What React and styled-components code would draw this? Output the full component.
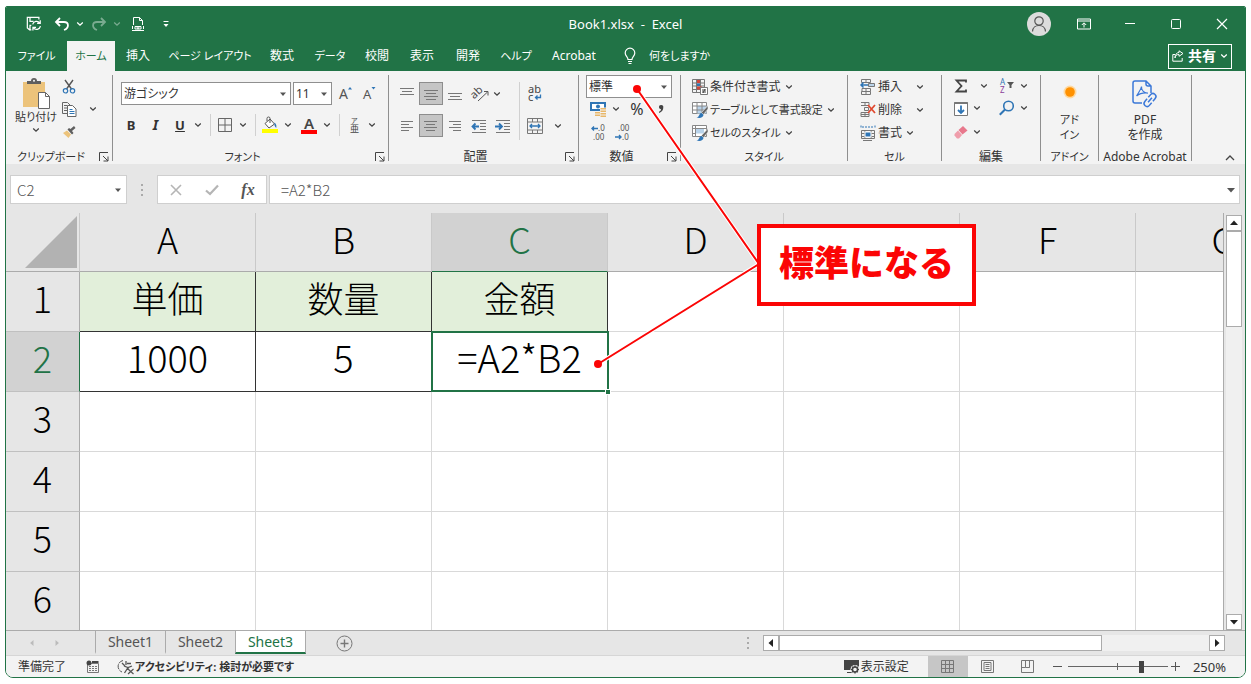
import React from "react";
import styled, { createGlobalStyle, css } from "styled-components";

const COLORS = {
  green: "#217346",
  ribbon: "#f3f3f3",
  chrome: "#e6e6e6",
  selected: "#d2d2d2",
  line: "#ababab",
  grid: "#d9d9d9",
  ink: "#333333",
  blue: "#2f75b5",
  red: "#fb0505",
  headerFill: "#e2efda",
};

const GlobalStyle = createGlobalStyle`
  *, *::before, *::after { box-sizing: border-box; }

  body {
    margin: 0;
    background: #fff;
    color: ${COLORS.ink};
    font: 12px/16px "Noto Sans", "Noto Sans CJK JP", sans-serif;
    font-feature-settings: "palt";
  }

  button, input, select {
    appearance: none;
    background: none;
    border: 0;
    border-radius: 0;
    color: inherit;
    font: inherit;
    font-feature-settings: inherit;
    margin: 0;
    outline: 0;
    padding: 0;
  }

  svg { display: block; flex: none; overflow: visible; }
`;

/* Shell */

const Window = styled.div`
  border: 1px solid ${COLORS.green};
  border-radius: 2px 2px 8px 8px;
  display: flex;
  flex-direction: column;
  height: calc(100vh - 12px);
  margin: 6px 5px;
  overflow: hidden;
  position: relative;
`;

const TitleBar = styled.header`
  align-items: center;
  background: ${COLORS.green};
  color: #fff;
  display: grid;
  flex: none;
  grid-template-columns: 1fr auto 1fr;
  height: 34px;
`;

const Title = styled.h1`
  font-size: 13px;
  font-weight: 400;
  margin: 0;
  white-space: pre;
`;

const Cluster = styled.div`
  align-items: center;
  display: flex;
  justify-content: ${(p) => (p.$end ? "flex-end" : "flex-start")};
  padding: ${(p) => p.$pad || "0"};
`;

const Tool = styled.button`
  align-items: center;
  background: ${(p) => (p.$on ? "#c5c5c5" : "none")};
  border: ${(p) => (p.$on ? "1px solid #8d8d8d" : "0")};
  display: flex;
  flex: none;
  font-size: ${(p) => p.$size || 12}px;
  height: ${(p) => p.$h || 22}px;
  justify-content: center;
  opacity: ${(p) => (p.$faded ? 0.4 : 1)};
  width: ${(p) => p.$w || 24}px;
`;

/* Tabs */

const TabBar = styled.nav`
  align-items: stretch;
  background: ${COLORS.green};
  color: #fff;
  display: flex;
  flex: none;
  height: 30px;
`;

const Tab = styled.button`
  background: ${(p) => (p.$active ? COLORS.ribbon : "none")};
  color: ${(p) => (p.$active ? COLORS.green : "inherit")};
  font-size: ${(p) => (p.$kana ? 11 : 12)}px;
  text-align: center;
  white-space: nowrap;
  width: ${(p) => p.$w}px;
`;

const TellMe = styled.button`
  align-items: center;
  display: flex;
  font-size: 11px;
  gap: 13px;
  margin-left: 17px;
`;

const Share = styled.button`
  align-items: center;
  align-self: center;
  border: 1px solid #fff;
  display: flex;
  font-size: 14px;
  font-weight: 700;
  gap: 4px;
  height: 25px;
  margin: 0 13px 0 auto;
  padding: 0 3px;
`;

/* Ribbon */

const Ribbon = styled.div`
  background: ${COLORS.ribbon};
  display: flex;
  flex: none;
  height: 93px;
  padding: 4px 0 3px;
`;

const GroupBox = styled.section`
  border-right: 1px solid #8f8f8f;
  display: flex;
  flex: none;
  flex-direction: column;
  width: ${(p) => p.$w}px;
`;

const GroupBody = styled.div`
  display: flex;
  flex: 1;
  padding-left: ${(p) => p.$left || 0}px;
`;

const GroupFooter = styled.footer`
  align-items: center;
  display: grid;
  grid-template-columns: 1fr ${(p) => (p.$launcher ? "16px" : "")};
  height: 10px;
  justify-items: center;
  line-height: 12px;

  h2 {
    font-size: ${(p) => (p.$kana ? 11 : 12)}px;
    font-weight: 400;
    margin: 0;
    white-space: nowrap;
  }
`;

const Lines = styled.div`
  display: flex;
  flex-direction: column;
  gap: ${(p) => p.$gap || 0}px;
  padding-top: ${(p) => p.$top || 0}px;
`;

const Line = styled.div`
  align-items: center;
  display: flex;
  gap: ${(p) => p.$gap || 0}px;
`;

const EditGrid = styled.div`
  align-content: start;
  display: grid;
  grid-template-columns: 20px 12px 14px 20px 14px;
  grid-template-rows: 22px 24px 22px;
`;

const Divider = styled.span`
  align-self: ${(p) => (p.$h ? "flex-start" : "center")};
  background: #d0d0d0;
  flex: none;
  height: ${(p) => p.$h || 22}px;
  margin: ${(p) => p.$margin};
  width: 1px;
`;

const BigButton = styled.button`
  align-items: center;
  display: flex;
  flex-direction: column;
  font-size: ${(p) => (p.$kana ? 11 : 12)}px;
  line-height: 15px;
  white-space: nowrap;
  width: ${(p) => p.$w}px;

  svg { margin: ${(p) => p.$iconMargin || "4px 0 0"}; }
`;

const WideButton = styled.button`
  align-items: center;
  display: flex;
  font-size: ${(p) => (p.$kana ? 11 : 12)}px;
  gap: 2px;
  height: 23px;
  white-space: nowrap;

  svg:last-child { margin-left: ${(p) => p.$push || 2}px; }
`;

const Combo = styled.label`
  align-items: center;
  background: #fff;
  border: 1px solid #8f8f8f;
  display: flex;
  height: 23px;
  padding-right: 4px;
  width: ${(p) => p.$w}px;

  select {
    flex: 1;
    min-width: 0;
    padding-left: 2px;
  }
`;

const Collapse = styled.button`
  align-self: flex-end;
  margin: 0 10px 0 auto;
`;

/* Formula bar */

const FormulaBar = styled.div`
  background: ${COLORS.chrome};
  display: flex;
  flex: none;
  height: 49px;
  padding: 11px 5px 9px 4px;
`;

const Field = styled.label`
  align-items: center;
  background: #fff;
  border: 1px solid #cfcfcf;
  color: #555;
  display: flex;
  font-family: "Noto Sans CJK JP", sans-serif;
  font-size: 15px;
  font-weight: 300;
  padding: 0 ${(p) => p.$pad[1]}px 0 ${(p) => p.$pad[0]}px;
  ${(p) => (p.$w ? css`width: ${p.$w}px;` : css`flex: 1;`)}

  input {
    flex: 1;
    min-width: 0;
  }
`;

const FormulaTools = styled.div`
  align-items: center;
  background: #fff;
  border: 1px solid #cfcfcf;
  display: flex;
  justify-content: space-around;
  margin-right: 2px;
  width: 110px;
`;

const FxMark = styled.span`
  color: #555;
  font: italic 700 16px/20px "Liberation Serif", serif;
`;

/* Sheet */

const Workspace = styled.main`
  background: ${COLORS.chrome};
  display: flex;
  flex: 1;
  min-height: 0;
`;

const Viewport = styled.div`
  border-right: 1px solid ${COLORS.line};
  flex: 1;
  min-width: 0;
  overflow: hidden;
`;

const Grid = styled.table`
  border-collapse: separate;
  border-spacing: 0;
  color: #000;
  font: 300 36px/44px "Noto Sans CJK JP", sans-serif;
  font-feature-settings: normal;
  table-layout: fixed;
  width: 1306px;
`;

const ColHead = styled.th`
  background: ${(p) => (p.$on ? COLORS.selected : COLORS.chrome)};
  border-bottom: 1px solid ${(p) => (p.$on ? COLORS.green : COLORS.line)};
  border-right: 1px solid #c9c9c9;
  color: ${(p) => (p.$on ? COLORS.green : "inherit")};
  font-weight: 300;
  height: 59px;
  padding: 0 0 8px;
`;

const Corner = styled(ColHead)`
  padding: 0;
`;

const RowHead = styled.th`
  background: ${(p) => (p.$on ? COLORS.selected : COLORS.chrome)};
  border-bottom: 1px solid #c0c0c0;
  border-right: 1px solid ${(p) => (p.$on ? COLORS.green : COLORS.line)};
  color: ${(p) => (p.$on ? COLORS.green : "inherit")};
  font-weight: 300;
  height: 60px;
  padding: 0 0 10px;
`;

const Cell = styled.td`
  background: ${(p) => (p.$filled ? COLORS.headerFill : "#fff")};
  border-bottom: 1px solid ${(p) => (p.$boxed ? "#333" : COLORS.grid)};
  border-right: 1px solid ${(p) => (p.$boxed ? "#333" : COLORS.grid)};
  font-size: ${(p) => (p.$filled ? 36 : 38)}px;
  padding: 0 0 10px;
  text-align: center;

  ${(p) =>
    p.$active &&
    css`
      position: relative;

      &::before {
        border: 2px solid ${COLORS.green};
        content: "";
        inset: -1px -2px -1px -1px;
        position: absolute;
      }

      &::after {
        background: ${COLORS.green};
        border: 1px solid #fff;
        bottom: -4px;
        content: "";
        height: 6px;
        position: absolute;
        right: -4px;
        width: 6px;
      }
    `}
`;

const SelectAll = styled.button`
  display: block;
  margin-left: auto;
  padding: 0 2px 0 0;
`;

const Scroll = styled.div`
  background: #f0f0f0;
  display: flex;
  ${(p) =>
    p.$vertical
      ? css`flex-direction: column; margin: 2px 3px 0 2px; width: 16px;`
      : css`height: 16px; margin: 0 20px 0 13px; width: 462px;`}

  button {
    align-items: center;
    background: #fff;
    border: 1px solid ${COLORS.line};
    display: flex;
    flex: none;
    height: 16px;
    justify-content: center;
    width: 16px;
  }

  button:last-child {
    ${(p) => (p.$vertical ? "margin-top: auto;" : "margin-left: auto;")}
  }
`;

const Thumb = styled.div`
  background: #fff;
  border: 1px solid ${COLORS.line};
  ${(p) => (p.$vertical ? "height: 96px;" : "width: 70%;")}
`;

/* Bottom bars */

const SheetBar = styled.div`
  align-items: center;
  background: ${COLORS.chrome};
  border-top: 1px solid ${COLORS.line};
  display: flex;
  flex: none;
  height: 25px;
  justify-content: space-between;
`;

const SheetTabs = styled.div`
  align-items: flex-start;
  display: flex;
  height: 100%;
`;

const SheetTab = styled.button`
  background: ${(p) => (p.$active ? "#fff" : "none")};
  border-bottom: 2px solid ${(p) => (p.$active ? COLORS.green : "transparent")};
  border-left: 1px solid ${COLORS.line};
  border-right: ${(p) => (p.$active ? `1px solid ${COLORS.line}` : 0)};
  color: ${(p) => (p.$active ? COLORS.green : "#555")};
  font-size: 14px;
  height: 23px;
  line-height: 20px;
  width: ${(p) => (p.$active ? 71 : 70)}px;
`;

const StatusBar = styled.footer`
  align-items: center;
  background: ${COLORS.ribbon};
  border-top: 1px solid #d6d6d6;
  display: flex;
  flex: none;
  height: 22px;
  justify-content: space-between;
`;

const StatusItem = styled.button`
  align-items: center;
  display: flex;
  font-size: ${(p) => p.$size || 12}px;
  font-weight: ${(p) => (p.$bold ? 700 : 400)};
  gap: ${(p) => p.$gap || 0}px;
  margin-left: ${(p) => p.$left || 0}px;
  white-space: nowrap;
`;

const ViewButton = styled.button`
  align-items: center;
  background: ${(p) => (p.$on ? "#c6c6c6" : "none")};
  display: flex;
  height: 21px;
  justify-content: center;
  width: 40px;
`;

const Zoom = styled.input`
  background: linear-gradient(#666, #666) center / 100% 1px no-repeat,
    linear-gradient(#666, #666) center / 1px 7px no-repeat;
  height: 14px;
  width: 100px;

  &::-webkit-slider-thumb {
    appearance: none;
    background: #444;
    height: 12px;
    width: 5px;
  }
`;

/* Annotation */

const Leader = styled.svg`
  height: 100%;
  left: 0;
  pointer-events: none;
  position: absolute;
  top: 0;
  width: 100%;
`;

const Callout = styled.aside`
  align-items: center;
  background: #fff;
  border: 4px solid ${COLORS.red};
  color: ${COLORS.red};
  display: flex;
  font: 900 35px/44px "Noto Sans CJK JP", sans-serif;
  font-feature-settings: normal;
  height: 82px;
  justify-content: center;
  left: 751px;
  padding-bottom: 8px;
  position: absolute;
  top: 217px;
  width: 219px;
`;

/* Icons */

const Icon = ({ w = 16, h = 16, children, ...rest }) => (
  <svg
    width={w}
    height={h}
    viewBox={`0 0 ${w} ${h}`}
    fill="none"
    stroke="#555"
    aria-hidden="true"
    {...rest}
  >
    {children}
  </svg>
);

const Chevron = ({ color = "#444", up }) =>
  up ? (
    <Icon w={10} h={6} stroke={color} strokeWidth="1.3">
      <path d="M1 5 5 1 9 5" />
    </Icon>
  ) : (
    <Icon w={8} h={6} stroke={color} strokeWidth="1.3">
      <path d="M1.2 1.5 4 4.2 6.8 1.5" />
    </Icon>
  );

const Arrow = ({ dir = "down", color = "#555", size = 6 }) => {
  const turn = { down: 0, left: 90, up: 180, right: 270 }[dir];
  return (
    <svg width={size} height={size} viewBox="0 0 8 8" aria-hidden="true">
      <path d="M0 2h8L4 6.5z" fill={color} transform={`rotate(${turn} 4 4)`} />
    </svg>
  );
};

const Launcher = () => (
  <Icon w={10} h={10} stroke="#444">
    <path d="M.5 9V.5H9M4 4l5 5M9 4.500V9H4.500" />
  </Icon>
);

const Dots = () => (
  <Icon w={4} h={14} stroke="none" fill="#aaa">
    <path d="M1 1h2v2H1zM1 6h2v2H1zM1 11h2v2H1z" />
  </Icon>
);

const SaveSyncIcon = () => (
  <Icon viewBox="0 0 18 18" stroke="#fff" strokeWidth="1.4">
    <path d="M6 15.500H4L1.500 13.500V1.500h13v2.500M4.500 1.500v4.500h4M4.500 15.500v-5H6" />
    <path d="M7.500 9.500a4.400 4.400 0 0 1 8-1.500M16 4.800v3.500h-3.500M16.300 11.500a4.400 4.400 0 0 1-8 1.500M7.800 16.200v-3.500h3.500" />
  </Icon>
);

const UndoIcon = ({ flip }) => (
  <Icon w={16} h={14} stroke="#fff" strokeWidth="1.8">
    <path
      d="M6 1 2 5l4 4M2.500 5h7.500c5 0 5.500 6 0 8"
      transform={flip ? "matrix(-1 0 0 1 16 0)" : undefined}
    />
  </Icon>
);

const PrintIcon = () => (
  <Icon w={14} h={16} stroke="#fff">
    <path d="M2.500 9V1.500h6l3 3V9M8.500 1.500v3h3M1 14.500h12M1.500 10v3M12.500 10v3M4 10.500h6v2.500H4z" />
    <circle cx="7" cy="11.800" r="1" />
  </Icon>
);

const CustomizeIcon = () => (
  <Icon w={6} h={8} stroke="#fff">
    <path d="M.5 1.500h5" />
    <path d="M.5 4h5L3 7z" fill="#fff" stroke="none" />
  </Icon>
);

const AvatarIcon = () => (
  <Icon w={24} h={24} stroke="#555" strokeWidth="1.2">
    <circle cx="12" cy="12" r="12" fill="#dcdcdc" stroke="none" />
    <circle cx="12" cy="9" r="4.200" />
    <path d="M5.500 19.500c.5-8 12.500-8 13 0" />
  </Icon>
);

const RibbonModeIcon = () => (
  <Icon w={14} h={12} stroke="#fff">
    <path d="M.5 1h13v10H.5zM.5 3h13M7 9.500V5M4.800 7 7 4.800 9.200 7" />
  </Icon>
);

const BulbIcon = () => (
  <Icon w={12} h={18} stroke="#fff" strokeWidth="1.2">
    <path d="M4 12.500c0-2.500-2.800-3.200-2.800-6.500a4.800 4.800 0 0 1 9.600 0c0 3.300-2.800 4-2.800 6.500zM4 14.500h4M4.500 16.500h3" />
  </Icon>
);

const ShareIcon = () => (
  <Icon w={12} h={12} stroke="#fff">
    <path d="M3 4.500H.8v6.700h9.400V8M3 8c.3-2.500 1.500-3.500 4-3.500v1.800L11 3.500 7 .8v1.700C4.500 2.800 3 4.500 3 8z" />
  </Icon>
);

const PasteIcon = () => (
  <Icon w={28} h={31} stroke="none">
    <path d="M1 4h22v25H1z" fill="#ecc37b" />
    <path d="M5 6V3h4a3 3 0 0 1 6 0h4v3z" fill="#5f5f5f" />
    <circle cx="12" cy="2.800" r="1" fill="#f3f3f3" />
    <path d="M16.500 14.500h7l4 4v12h-11z" fill="#fff" stroke="#666" />
    <path d="M23.500 14.500v4h4" stroke="#666" />
  </Icon>
);

const ScissorsIcon = () => (
  <Icon w={14} h={15} strokeWidth="1.4">
    <path d="M3 1l6.500 9M11 1 4.500 10" />
    <circle cx="3.500" cy="11.800" r="2.200" stroke={COLORS.blue} strokeWidth="1.200" />
    <circle cx="10.500" cy="11.800" r="2.200" stroke={COLORS.blue} strokeWidth="1.200" />
  </Icon>
);

const CopyIcon = () => (
  <Icon w={15} h={15} stroke="#666">
    <path d="M5 11.500H.5V.5h5l3 3M2 3.500h3M2 6h3M2 8.500h3" />
    <path d="M5.500 3.500h5l3.500 3.500v7.500H5.500z" fill="#fff" />
    <path d="M7.500 7.500h3M7.500 9.500h5M7.500 11.500h5" stroke={COLORS.blue} />
  </Icon>
);

const BrushIcon = () => (
  <Icon w={14} h={14} stroke="none">
    <path d="M1 8l4-2.500 4 4L6.500 13z" fill="#ecc37b" />
    <path d="M5.500 4.500l4.500 5 1.500-1.500-1.500-2L13.500 3 12 1 8.500 4 7 3z" fill="#5f5f5f" />
  </Icon>
);

const GrowIcon = ({ down }) => (
  <Icon w={14} h={15} stroke="none" fill="#555">
    <text x="0" y="13" fontSize={down ? 13 : 14} fontFamily="Noto Sans">A</text>
    <path d={down ? "M8.500 1h4l-2 2.500z" : "M9 3.500h4L11 1z"} fill={COLORS.blue} />
  </Icon>
);

const BorderIcon = () => (
  <Icon w={14} h={14} stroke="#666">
    <path d="M.5.500h13v13H.5zM7 .5v13M.5 7h13" />
  </Icon>
);

const FillIcon = () => (
  <Icon w={16} h={16}>
    <path d="M3 6.500 8 2l4.500 5L7 11zM8 6V1.500a1.500 1.500 0 0 0-3 0V4" fill="#fff" />
    <path d="M12.500 5.500c2 1.500 2 3 1.800 5.500-1.500-1-2.300-3-1.800-5.500z" fill={COLORS.blue} stroke="none" />
    <path d="M0 12h16v4H0z" fill="#ff0" stroke="none" />
  </Icon>
);

const FontColorIcon = () => (
  <Icon w={16} h={17} stroke="none" fill="#444">
    <text x="3" y="12" fontSize="15" fontWeight="600" fontFamily="Noto Sans">A</text>
    <path d="M0 13h16v4H0z" fill="#f00" />
  </Icon>
);

const RubyIcon = () => (
  <Icon w={10} h={16} stroke="none" fill="#444">
    <text x="2" y="6" fontSize="7" fontFamily="Noto Sans CJK JP">ア</text>
    <text x="1" y="15" fontSize="9" fontFamily="Noto Sans CJK JP">亜</text>
  </Icon>
);

const PARAGRAPHS = {
  top: "M0 1.500h14M2 4.500h10M0 7.500h14",
  middle: "M0 3.500h14M2 6.500h10M0 9.500h14M2 12.500h10",
  bottom: "M0 6.500h14M2 9.500h10M0 12.500h14",
  left: "M1 2.500h12M1 5.500h8M1 8.500h12M1 11.500h8",
  center: "M0 2.500h13M2 5.500h9M0 8.500h13M2 11.500h9",
  right: "M1 2.500h12M5 5.500h8M1 8.500h12M5 11.500h8",
};

const ParagraphIcon = ({ kind }) => (
  <Icon w={14} h={14} stroke="#777">
    <path d={PARAGRAPHS[kind]} />
  </Icon>
);

const IndentIcon = ({ out }) => (
  <Icon w={16} h={14} stroke="#777">
    <path d="M1 1.500h14M9 4.500h6M9 7.500h6M9 10.500h6M1 13.500h14" />
    <path
      d={out ? "M8 7.500H1.500M4.500 4.500l-3 3 3 3" : "M0 7.500h6.500M4 4.500l3 3-3 3"}
      stroke={COLORS.blue}
      strokeWidth="1.800"
    />
  </Icon>
);

const OrientIcon = () => (
  <Icon w={16} h={16} stroke="#555">
    <text x="-2" y="10" fontSize="11" fill="#444" stroke="none" fontFamily="Noto Sans" transform="rotate(-42 4 8)">ab</text>
    <path d="M5 15 14.500 6M11 5.500h4v4" />
  </Icon>
);

const WrapIcon = () => (
  <Icon w={14} h={16} stroke={COLORS.blue} strokeWidth="1.300">
    <g fill="#444" stroke="none" fontSize="11" fontFamily="Noto Sans">
      <text x="0" y="7">ab</text>
      <text x="0" y="15">c</text>
    </g>
    <path d="M12.500 8.500v3H7.500M9.500 9.500l-2 2 2 2" />
  </Icon>
);

const MergeIcon = () => (
  <Icon w={16} h={16} stroke="#777">
    <path d="M.5.500h15v15H.5zM.5 4h15M.5 12h15M5.500.5V4M10.500.5V4M5.500 12v3.500M10.500 12v3.500" />
    <path d="M3 8h10M5 6 3 8l2 2M11 6l2 2-2 2" stroke={COLORS.blue} strokeWidth="1.300" />
  </Icon>
);

const MoneyIcon = () => (
  <Icon w={16} h={15} stroke="none">
    <path d="M0 0h16v9H0z" fill={COLORS.blue} />
    <path d="M2 2h12v5H2z" fill="#fff" />
    <circle cx="8" cy="4.500" r="2" fill={COLORS.blue} />
    <path d="M5 9h5v6H5zM10 5.500h6v9.500h-6z" fill="#f3f3f3" />
    <path d="M5 10h5v1.500H5zM5 12.500h5V14H5zM10.500 6H16v1.500h-5.500zM10.500 8.500H16V10h-5.500zM10.500 11H16v1.500h-5.500zM10.500 13.500H16V15h-5.500z" fill="#e8b76a" />
  </Icon>
);

const CommaIcon = () => (
  <Icon w={6} h={9} stroke="none" fill="#444">
    <path d="M3 0a2 2 0 0 1 2.300 2.300C5.300 5 4 7 1 8V6.800C2.300 6.200 3 5.300 3 4.200A2.100 2.100 0 0 1 3 0z" />
  </Icon>
);

const DecimalIcon = ({ less }) => (
  <Icon w={14} h={15} stroke={COLORS.blue} strokeWidth="1.400">
    <g fill="#555" stroke="none" fontSize="8" fontFamily="Noto Sans">
      <text x={less ? 3 : 7} y="6">{less ? ".00" : ".0"}</text>
      <text x={less ? 7 : 2} y="15">{less ? ".0" : ".00"}</text>
    </g>
    <path d={less ? "M0 12h6M4 10l2 2-2 2" : "M7 3.500H1M3 1.500l-2 2 2 2"} />
  </Icon>
);

const CondIcon = () => (
  <Icon stroke="#777">
    <path d="M.5.500h12v13H.5zM4.500.5v13M8.500.5v13M.5 4h12M.5 7h12M.5 10.500h12" />
    <path d="M5 1h3v3H5zM5 7.500h5v3H5z" fill="#d0453a" stroke="none" />
    <path d="M5 4.500h3v2.500H5z" fill={COLORS.blue} stroke="none" />
    <path d="M8.500 8.500h7v7h-7z" fill="#fff" />
    <path d="M10 11h4M10 13h4M13 10l-2 4" stroke="#444" />
  </Icon>
);

const TableIcon = ({ cell }) => (
  <Icon stroke="#888">
    <path d="M.5.500h14v11H.5z" fill="#fff" />
    <path d={cell ? "M4 3.500h8v5H4z" : "M5 4h9.500v7.500H5z"} fill="#b9d3ea" stroke="none" />
    <path d={cell ? "M3.500.5v11M.5 3.500h14M.5 8.500h3" : "M5 .5v11M10 .5v11M.5 4h14M.5 8h14"} />
    <path d="M16 3.500 9.500 10.500l2 2L16 7z" fill="#666" stroke="#f3f3f3" strokeWidth=".6" />
    <path d="M4.500 15.500c3 0 2-4 5-4.500l2 1.800c0 2.700-3.500 3.700-7 2.700z" fill={COLORS.blue} stroke="none" />
  </Icon>
);

const InsertIcon = () => (
  <Icon stroke="#777">
    <path d="M1.500.500h9v3h-9zM6 .5v3M1.500 12.500h9v3h-9zM6 12.500v3M2 9.500h8.500v3M6 9.500v3M2 9.500v3" />
    <path d="M8.500 4.500h6v3h-6z" fill="#b9d3ea" />
    <path d="M8 6H1M3.500 3.500 1 6l2.500 2.500" stroke={COLORS.blue} strokeWidth="1.500" />
  </Icon>
);

const DeleteIcon = () => (
  <Icon stroke="#777">
    <path d="M1 .5h8v3H1M5 .5v3M4.500 5.500h4v3h-4zM1 10.500h8v4H1zM1 12.500h8M5 10.500v4" />
    <path d="M8 3l7 8M15 3l-7 8" stroke="#e0492f" strokeWidth="1.800" />
  </Icon>
);

const FormatIcon = () => (
  <Icon stroke="#777">
    <path d="M1 .5v3M15 .5v3M2 2h12" stroke={COLORS.blue} strokeDasharray="2 1" />
    <path d="M1.500 5.500h13v8h-13zM5 5v9M11 5v9M1.500 8.500h13M1.500 11.500h13M3 15.500h9" />
    <path d="M5 7h6v5H5z" fill={COLORS.blue} stroke="#fff" />
  </Icon>
);

const SigmaIcon = () => (
  <Icon w={12} h={14} stroke="#444" strokeWidth="1.800">
    <path d="M11 3.500V1.500H1.500L6.500 7l-5 5.500H11v-2" />
  </Icon>
);

const SortIcon = () => (
  <Icon w={14} h={14} stroke="none">
    <text x="0" y="6" fontSize="8" fill={COLORS.blue} fontFamily="Noto Sans">A</text>
    <text x="0" y="14" fontSize="8" fill="#8a3f9b" fontFamily="Noto Sans">Z</text>
    <path d="M7 3h7l-2.500 3v3h-2V6z" fill="#555" />
  </Icon>
);

const FillDownIcon = () => (
  <Icon w={14} h={14} stroke="#777">
    <path d="M.5.500h13v13H.5z" fill="#fff" />
    <path d="M.5 1h13" strokeWidth="2" />
    <path d="M7 3.500v7.500M4 8l3 3 3-3" stroke={COLORS.blue} strokeWidth="1.800" />
  </Icon>
);

const FindIcon = () => (
  <Icon w={16} h={16} stroke={COLORS.blue} strokeWidth="1.600">
    <circle cx="9.500" cy="6" r="4.800" />
    <path d="M6 9.500.8 14.700" strokeWidth="2" />
  </Icon>
);

const EraserIcon = () => (
  <Icon w={14} h={13} stroke="none">
    <path d="M9 0l4.500 4.500-5 4L4.500 4z" fill="#e8788c" />
    <path d="M4 4.500 8 9l-3 3.500H3L.5 9.500V8z" fill="#ef9dab" />
  </Icon>
);

const AddinIcon = () => (
  <Icon w={14} h={14} stroke="none">
    <circle cx="7" cy="7" r="6.500" fill="#ffd9a0" />
    <circle cx="7" cy="7" r="4.800" fill="#ff9100" />
  </Icon>
);

const PdfIcon = () => (
  <Icon w={26} h={28} stroke="#3b78d8" strokeWidth="1.500">
    <path d="M10 23H3a2 2 0 0 1-2-2V3a2 2 0 0 1 2-2h11l5 5v7M14 1v3a2 2 0 0 0 2 2h3" />
    <path d="M4.500 16c2-3.500 4.500-6 5-9.500M9.500 6.500c-.5 4 3 7 6.500 6.500M4.500 16c3-2.500 7-3.500 11.500-3" strokeWidth="1.200" />
    <g transform="rotate(-50 18 20)">
      <path d="M17 17h-3.500a3 3 0 0 0 0 6H17M19 17h3.500a3 3 0 0 1 0 6H19M15 20h6" />
    </g>
  </Icon>
);

const CancelIcon = () => (
  <Icon w={12} h={12} stroke="#b5b5b5" strokeWidth="1.600">
    <path d="M1 1l10 10M11 1 1 11" />
  </Icon>
);

const CheckIcon = () => (
  <Icon w={14} h={12} stroke="#b5b5b5" strokeWidth="2.200">
    <path d="M1 6.500l4 3.500 8-8.500" />
  </Icon>
);

const PlusIcon = () => (
  <Icon w={17} h={17} stroke="#777">
    <circle cx="8.500" cy="8.500" r="7.500" />
    <path d="M4.500 8.500h8M8.500 4.500v8" strokeWidth="1.400" />
  </Icon>
);

const MacroIcon = () => (
  <Icon w={13} h={13} stroke="#777">
    <path d="M1.500 3.500h11v9h-11z" />
    <path d="M3 6.500h8M3 8.500h8M3 10.500h8" strokeDasharray="2 1" />
    <path d="M6 2h6.500" stroke="#444" strokeWidth="2" />
    <circle cx="3" cy="3" r="2.500" fill="#444" stroke="none" />
  </Icon>
);

const AccessIcon = () => (
  <Icon w={17} h={16} stroke="#555">
    <path d="M6 1.500a6 6 0 0 0-1 11.500" strokeDasharray="5 1" />
    <path d="M5 4l3 3M9 2v4M10 4.500h4M7 7l4 1.500L15 7M11 8.500 7.500 14M11 8.500V11" strokeWidth="1.300" />
    <path d="M11 10l5.500 5M16.500 10 11 15" strokeWidth="1.200" />
  </Icon>
);

const DisplayIcon = () => (
  <Icon w={16} h={14} stroke="none">
    <path d="M0 0h15v10H0zM3 12h5v1H3z" fill="#444" />
    <circle cx="11" cy="9.500" r="4.500" fill="#f3f3f3" />
    <circle cx="11" cy="9.500" r="2.500" stroke="#444" strokeWidth="1.400" />
    <path d="M11 5.500v1.500M11 12v1.500M7 9.500h1.500M13.500 9.500H15M8.200 6.700l1 1M12.800 11.300l1 1M13.800 6.700l-1 1M9.200 11.300l-1 1" stroke="#444" strokeWidth="1.400" />
  </Icon>
);

const VIEWS = {
  標準: "M.5.500h12v12H.5zM4.500.5v12M8.500.5v12M.5 4.500h12M.5 8.500h12",
  ページレイアウト: "M.5.500h12v12H.5zM3 2.500h7v8H3zM4.500 4.500h4M4.500 6.500h4M4.500 8.500h4",
  改ページプレビュー: "M.5.500h12v12H.5zM4.500.5v7h4v-7M.5 7.500h4M8.500 7.500v-7",
};

/* Parts */

const Group = ({ title, w, left, launcher, kana, children }) => (
  <GroupBox $w={w} aria-label={title}>
    <GroupBody $left={left}>{children}</GroupBody>
    <GroupFooter $launcher={launcher} $kana={kana}>
      <h2>{title}</h2>
      {launcher && (
        <button aria-label={`${title}の詳細`}>
          <Launcher />
        </button>
      )}
    </GroupFooter>
  </GroupBox>
);

const More = ({ w = 16, color, ...rest }) => (
  <Tool $w={w} aria-label="その他" {...rest}>
    <Chevron color={color} />
  </Tool>
);

const WideMore = styled(More)`
  grid-column: span 2;
`;

const Select = ({ label, value, w }) => (
  <Combo $w={w}>
    <select aria-label={label} defaultValue={value}>
      <option>{value}</option>
    </select>
    <Arrow />
  </Combo>
);

const TABS = [
  { name: "ファイル", w: 61, kana: true },
  { name: "ホーム", w: 48, kana: true },
  { name: "挿入", w: 46 },
  { name: "ページ レイアウト", w: 98, kana: true },
  { name: "数式", w: 46 },
  { name: "データ", w: 50, kana: true },
  { name: "校閲", w: 44 },
  { name: "表示", w: 46 },
  { name: "開発", w: 46 },
  { name: "ヘルプ", w: 50, kana: true },
  { name: "Acrobat", w: 66 },
];

const COLUMNS = ["A", "B", "C", "D", "E", "F", "G"];
const ROWS = [["単価", "数量", "金額"], ["1000", "5", "=A2*B2"], [], [], [], []];
const SHEETS = ["Sheet1", "Sheet2", "Sheet3"];

const Spreadsheet = () => (
  <Grid>
    <colgroup>
      <col width="74" />
      {COLUMNS.map((name) => (
        <col key={name} />
      ))}
    </colgroup>
    <thead>
      <tr>
        <Corner>
          <SelectAll aria-label="すべて選択">
            <svg width="52" height="52" viewBox="0 0 52 52">
              <path d="M52 0v52H0z" fill="#b2b2b2" />
            </svg>
          </SelectAll>
        </Corner>
        {COLUMNS.map((name) => (
          <ColHead key={name} scope="col" $on={name === "C"}>
            {name}
          </ColHead>
        ))}
      </tr>
    </thead>
    <tbody>
      {ROWS.map((row, y) => (
        <tr key={y}>
          <RowHead scope="row" $on={y === 1}>
            {y + 1}
          </RowHead>
          {COLUMNS.map((name, x) => (
            <Cell
              key={name}
              $boxed={row[x] !== undefined}
              $filled={y === 0 && x < 3}
              $active={y === 1 && x === 2}
            >
              {row[x]}
            </Cell>
          ))}
        </tr>
      ))}
    </tbody>
  </Grid>
);

const App = () => (
  <>
    <GlobalStyle />
    <Window>
      <TitleBar>
        <Cluster $pad="0 0 0 15px">
          <Tool $w={26} aria-label="上書き保存"><SaveSyncIcon /></Tool>
          <Tool $w={30} aria-label="元に戻す"><UndoIcon /></Tool>
          <More w={6} color="#fff" />
          <Tool $w={32} $faded aria-label="やり直し"><UndoIcon flip /></Tool>
          <More w={4} color="#fff" $faded />
          <Tool $w={38} aria-label="印刷プレビュー"><PrintIcon /></Tool>
          <Tool $w={18} aria-label="カスタマイズ"><CustomizeIcon /></Tool>
        </Cluster>
        <Title>Book1.xlsx  -  Excel</Title>
        <Cluster $end>
          <Tool $w={44} $h={24} aria-label="アカウント"><AvatarIcon /></Tool>
          <Tool $w={46} aria-label="リボンの表示"><RibbonModeIcon /></Tool>
          <Tool $w={46} aria-label="最小化">
            <Icon w={12} h={12} stroke="#fff"><path d="M1 5.500h10" /></Icon>
          </Tool>
          <Tool $w={46} aria-label="最大化">
            <Icon w={12} h={12} stroke="#fff"><rect x="1.500" y="1.500" width="9" height="9" rx="1" /></Icon>
          </Tool>
          <Tool $w={46} aria-label="閉じる">
            <Icon w={12} h={12} stroke="#fff" strokeWidth="1.200"><path d="M1 1l10 10M11 1 1 11" /></Icon>
          </Tool>
        </Cluster>
      </TitleBar>

      <TabBar>
        {TABS.map(({ name, w, kana }) => (
          <Tab key={name} $w={w} $kana={kana} $active={name === "ホーム"}>
            {name}
          </Tab>
        ))}
        <TellMe>
          <BulbIcon />
          何をしますか
        </TellMe>
        <Share>
          <ShareIcon />
          共有
          <Chevron color="#fff" />
        </Share>
      </TabBar>

      <Ribbon>
        <Group title="クリップボード" w={107} left={5} launcher kana>
          <BigButton $w={50} $iconMargin="3px 0 0" $kana>
            <PasteIcon />
            貼り付け
            <Chevron />
          </BigButton>
          <Lines>
            <Tool $w={16} $h={23} aria-label="切り取り"><ScissorsIcon /></Tool>
            <Line>
              <Tool $w={16} aria-label="コピー"><CopyIcon /></Tool>
              <More w={32} />
            </Line>
            <Tool $w={16} $h={24} aria-label="書式のコピー"><BrushIcon /></Tool>
          </Lines>
        </Group>

        <Group title="フォント" w={276} left={8} launcher kana>
          <Lines $top={7} $gap={9}>
            <Line $gap={2}>
              <Select label="フォント" value="游ゴシック" w={170} />
              <Select label="フォント サイズ" value="11" w={39} />
              <Tool $w={24} aria-label="拡大"><GrowIcon /></Tool>
              <Tool $w={20} aria-label="縮小"><GrowIcon down /></Tool>
            </Line>
            <Line>
              <Tool $w={20} $size={13} aria-label="太字"><b>B</b></Tool>
              <Tool $w={29} $size={14} aria-label="斜体">
                <b><i>I</i></b>
              </Tool>
              <Tool $w={20} $size={13} aria-label="下線"><b><u>U</u></b></Tool>
              <More />
              <Divider $margin="0 5px 0 4px" />
              <Tool $w={18} aria-label="罫線"><BorderIcon /></Tool>
              <More w={18} />
              <Divider $margin="0 4px 0 3px" />
              <Tool $w={20} aria-label="塗りつぶし"><FillIcon /></Tool>
              <More />
              <Tool $w={26} aria-label="フォントの色"><FontColorIcon /></Tool>
              <More w={10} />
              <Divider $margin="0 6px 0 7px" />
              <Tool $w={16} aria-label="ふりがな"><RubyIcon /></Tool>
              <More w={20} />
            </Line>
          </Lines>
        </Group>

        <Group title="配置" w={190} left={6} launcher>
          <Lines $top={7} $gap={9}>
            <Line>
              <Tool $h={23} aria-label="上揃え"><ParagraphIcon kind="top" /></Tool>
              <Tool $h={23} $on aria-label="上下中央揃え"><ParagraphIcon kind="middle" /></Tool>
              <Tool $h={23} aria-label="下揃え"><ParagraphIcon kind="bottom" /></Tool>
              <Tool $w={28} aria-label="方向"><OrientIcon /></Tool>
              <More w={4} />
            </Line>
            <Line>
              <Tool $h={23} aria-label="左揃え"><ParagraphIcon kind="left" /></Tool>
              <Tool $h={23} $on aria-label="中央揃え"><ParagraphIcon kind="center" /></Tool>
              <Tool $h={23} aria-label="右揃え"><ParagraphIcon kind="right" /></Tool>
              <Tool aria-label="インデントを減らす"><IndentIcon out /></Tool>
              <Tool aria-label="インデントを増やす"><IndentIcon /></Tool>
            </Line>
          </Lines>
          <Divider $h={58} $margin="7px 3px 0 4px" />
          <Lines $top={7} $gap={9}>
            <Tool $h={23} aria-label="折り返し"><WrapIcon /></Tool>
            <Line>
              <Tool $h={23} aria-label="セルを結合"><MergeIcon /></Tool>
              <More w={22} />
            </Line>
          </Lines>
        </Group>

        <Group title="数値" w={102} left={7} launcher>
          <Lines>
            <Select label="表示形式" value="標準" w={86} />
            <Line>
              <Tool aria-label="通貨"><MoneyIcon /></Tool>
              <More w={12} />
              <Tool $w={30} $size={16} aria-label="パーセント">%</Tool>
              <Tool $w={18} aria-label="桁区切り"><CommaIcon /></Tool>
            </Line>
            <Line>
              <Tool $h={24} aria-label="小数点以下を増やす"><DecimalIcon /></Tool>
              <Tool $h={24} aria-label="小数点以下を減らす"><DecimalIcon less /></Tool>
            </Line>
          </Lines>
        </Group>

        <Group title="スタイル" w={167} left={11} kana>
          <Lines>
            <WideButton><CondIcon />条件付き書式<Chevron /></WideButton>
            <WideButton $kana><TableIcon />テーブルとして書式設定<Chevron /></WideButton>
            <WideButton $kana><TableIcon cell />セルのスタイル<Chevron /></WideButton>
          </Lines>
        </Group>

        <Group title="セル" w={94} left={12} kana>
          <Lines>
            <WideButton $push={12}><InsertIcon />挿入<Chevron /></WideButton>
            <WideButton $push={12}><DeleteIcon />削除<Chevron /></WideButton>
            <WideButton><FormatIcon />書式<Chevron /></WideButton>
          </Lines>
        </Group>

        <Group title="編集" w={99} left={9}>
          <EditGrid>
            <Tool $w={20} aria-label="合計"><SigmaIcon /></Tool>
            <WideMore w={26} />
            <Tool $w={20} aria-label="並べ替え"><SortIcon /></Tool>
            <More w={14} />
            <Tool $w={20} $h={24} aria-label="フィル"><FillDownIcon /></Tool>
            <More w={12} />
            <span />
            <Tool $w={20} aria-label="検索"><FindIcon /></Tool>
            <More w={14} />
            <Tool $w={20} aria-label="クリア"><EraserIcon /></Tool>
            <More w={12} />
          </EditGrid>
        </Group>

        <Group title="アドイン" w={58} kana>
          <BigButton $w={57} $iconMargin="10px 0 13px" $kana>
            <AddinIcon />
            <span>アド<br />イン</span>
          </BigButton>
        </Group>

        <Group title="Adobe Acrobat" w={93}>
          <BigButton $w={92} $iconMargin="5px 0 4px">
            <PdfIcon />
            <span>PDF<br />を作成</span>
          </BigButton>
        </Group>

        <Collapse aria-label="リボンを折りたたむ"><Chevron up /></Collapse>
      </Ribbon>

      <FormulaBar>
        <Field $w={117} $pad={[6, 5]}>
          <input aria-label="名前ボックス" defaultValue="C2" />
          <Arrow />
        </Field>
        <Cluster $pad="0 13px"><Dots /></Cluster>
        <FormulaTools>
          <Tool aria-label="キャンセル"><CancelIcon /></Tool>
          <Tool aria-label="入力"><CheckIcon /></Tool>
          <Tool aria-label="関数の挿入"><FxMark>fx</FxMark></Tool>
        </FormulaTools>
        <Field $pad={[11, 4]}>
          <input aria-label="数式バー" defaultValue="=A2*B2" />
          <Arrow size={8} />
        </Field>
      </FormulaBar>

      <Workspace>
        <Viewport>
          <Spreadsheet />
        </Viewport>
        <Scroll $vertical>
          <button aria-label="上へ"><Arrow dir="up" color="#222" size={8} /></button>
          <Thumb $vertical />
          <button aria-label="下へ"><Arrow color="#222" size={8} /></button>
        </Scroll>
      </Workspace>

      <SheetBar>
        <SheetTabs>
          <Cluster $pad="9px 17px 0 22px">
            <Tool $w={8} $h={6} aria-label="前のシート"><Arrow dir="left" color="#bbb" /></Tool>
            <Tool $w={42} $h={6} aria-label="次のシート"><Arrow dir="right" color="#bbb" /></Tool>
          </Cluster>
          {SHEETS.map((name) => (
            <SheetTab key={name} $active={name === "Sheet3"}>{name}</SheetTab>
          ))}
          <Tool $w={76} $h={24} aria-label="新しいシート"><PlusIcon /></Tool>
        </SheetTabs>
        <Cluster>
          <Dots />
          <Scroll>
            <button aria-label="左へ"><Arrow dir="left" color="#222" size={8} /></button>
            <Thumb />
            <button aria-label="右へ"><Arrow dir="right" color="#222" size={8} /></button>
          </Scroll>
        </Cluster>
      </SheetBar>

      <StatusBar>
        <Cluster>
          <StatusItem as="span" $left={12}>準備完了</StatusItem>
          <StatusItem $left={20} aria-label="マクロの記録"><MacroIcon /></StatusItem>
          <StatusItem $bold $size={11} $left={18} $gap={1}>
            <AccessIcon />
            アクセシビリティ: 検討が必要です
          </StatusItem>
        </Cluster>
        <Cluster $pad="0 19px 0 0">
          <StatusItem $gap={1}><DisplayIcon />表示設定</StatusItem>
          <Cluster $pad="0 0 0 19px">
            {Object.entries(VIEWS).map(([name, d]) => (
              <ViewButton key={name} aria-label={name} $on={name === "標準"}>
                <Icon w={13} h={13} stroke="#777"><path d={d} /></Icon>
              </ViewButton>
            ))}
          </Cluster>
          <Tool $w={20} aria-label="縮小">
            <Icon w={9} h={9}><path d="M0 4.500h9" /></Icon>
          </Tool>
          <Zoom type="range" aria-label="ズーム" min="0" max="100" defaultValue="75" />
          <Tool $w={16} aria-label="拡大">
            <Icon w={9} h={9}><path d="M0 4.500h9M4.500 0v9" /></Icon>
          </Tool>
          <StatusItem $size={13} $left={9}>250%</StatusItem>
        </Cluster>
      </StatusBar>

      <Leader aria-hidden="true">
        <path d="M631 82 753 257 592 357" fill="none" stroke="#fff" strokeWidth="4" />
        <path d="M631 82 753 257 592 357" fill="none" stroke={COLORS.red} strokeWidth="2" />
        <circle cx="631" cy="82" r="4" fill={COLORS.red} />
        <circle cx="592" cy="357" r="4" fill={COLORS.red} />
      </Leader>
      <Callout>標準になる</Callout>
    </Window>
  </>
);

export default App;
